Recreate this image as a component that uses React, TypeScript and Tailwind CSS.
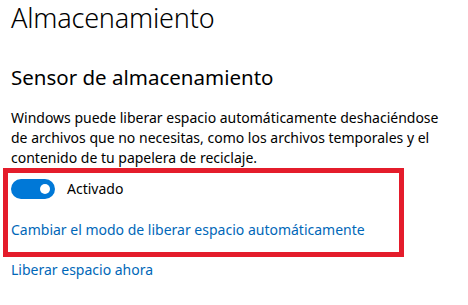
export default function App() {
  return (
    <div className="w-[468px] h-[305px] bg-white overflow-hidden" style={{ fontFamily: '"Noto Sans", "Open Sans", sans-serif' }}>
      <div className="pl-[11px] pt-[0px]">
        <h1 className="text-[27px] leading-[36px] font-light text-black tracking-[-0.2px]">Almacenamiento</h1>
        <h2 className="mt-[28px] text-[20.5px] leading-[26px] font-normal text-black">Sensor de almacenamiento</h2>
        <p className="mt-[18px] text-[14px] leading-[20px] text-black w-[440px]">
          Windows puede liberar espacio automáticamente deshaciéndose de archivos que no necesitas, como los archivos temporales y el contenido de tu papelera de reciclaje.
        </p>
        <div className="-ml-[8px] w-[401px] h-[89px] border-[5px] border-[#e41c2b] pl-[3px] pt-[6px]">
          <div className="flex items-center gap-[12px]">
            <div className="w-[44px] h-[20px] rounded-full bg-[#0078d7] flex items-center justify-end pr-[5px]">
              <div className="w-[10px] h-[10px] rounded-full bg-white" />
            </div>
            <span className="text-[14px] leading-[20px] text-black">Activado</span>
          </div>
          <div className="mt-[21px] text-[14px] leading-[20px] text-[#0067b8]">Cambiar el modo de liberar espacio automáticamente</div>
        </div>
        <div className="mt-[3px] text-[14px] leading-[20px] text-[#0067b8]">Liberar espacio ahora</div>
      </div>
    </div>
  );
}
